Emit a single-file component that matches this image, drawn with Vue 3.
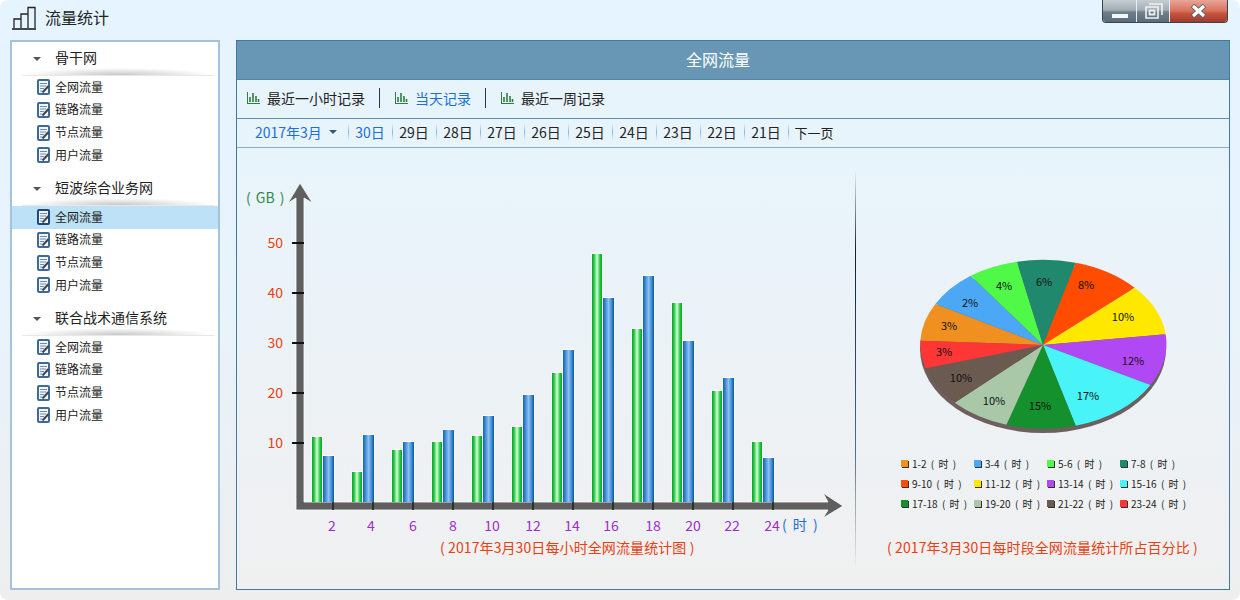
<template>
  <div class="win">
    <header class="titlebar">
      <svg class="logo" width="25" height="24" viewBox="0 0 25 24">
        <path d="M2 22V13h7v9M9 22V8h7v14M16 22V1.500h7V22" fill="none" stroke="#222" stroke-width="1.300"/>
        <path d="M0 23h24" stroke="#111" stroke-width="1.500"/>
      </svg>
      <span class="apptitle">流量统计</span>
      <div class="winbtns">
        <div class="wb wb-min"><i></i></div>
        <div class="wb wb-max">
          <svg width="19" height="16" viewBox="0 0 19 16">
            <path d="M5 1h13v11M2 4h12v11H2z" fill="none" stroke="#f2f4f6" stroke-width="1.600"/>
            <path d="M5.500 7.500h5v4h-5z" fill="none" stroke="#e8ecef" stroke-width="1.800"/>
          </svg>
        </div>
        <div class="wb wb-close">
          <svg width="17" height="14" viewBox="0 0 17 14">
            <path d="M2.500 1.500 14.500 12.500M14.500 1.500 2.500 12.500" stroke="#51606f" stroke-width="5"/>
            <path d="M3 2 14 12M14 2 3 12" stroke="#fff" stroke-width="3.200"/>
          </svg>
        </div>
      </div>
    </header>

    <div class="content">
      <aside class="side">
        <section v-for="g in groups" :key="g" class="group">
          <div class="ghead"><i class="caret"></i>{{ g }}</div>
          <div v-for="it in items" :key="it" class="row" :class="{ on: g === '短波综合业务网' && it === '全网流量' }">
            <svg class="doc" width="13" height="16" viewBox="0 0 13 16">
              <rect x="1" y="1" width="11" height="14" rx="1" fill="#f2f6fa" stroke="#3f6a96" stroke-width="2"/>
              <path d="M3 4.500h7M3 7h6M3 9.500h4M3 12h2" stroke="#6f8cac" stroke-width="1"/>
              <path d="M5.500 13.500 11.500 7" stroke="#3c4650" stroke-width="2"/>
            </svg>
            <span>{{ it }}</span>
          </div>
        </section>
      </aside>

      <main class="panel">
        <div class="phead">全网流量</div>
        <nav class="tabs">
          <template v-for="(t, i) in tabs" :key="t">
            <i v-if="i" class="tabsep"></i>
            <div class="tab" :class="{ cur: i === 1 }">
              <svg width="13" height="12" viewBox="0 0 13 12">
                <path d="M.5 0v12M.5 11.500H13" stroke="#2f7f40" fill="none"/>
                <path d="M3 10V5M6 10V1M9 10V4M11.500 10V7" stroke="#2f7f40" stroke-width="1.600"/>
              </svg>
              <span>{{ t }}</span>
            </div>
          </template>
        </nav>
        <nav class="dates">
          <div class="month">2017年3月<i class="mcaret"></i></div>
          <div v-for="(d, i) in days" :key="d" class="day" :class="{ cur: i === 0 }">{{ d }}</div>
          <div class="day next">下一页</div>
        </nav>

        <div class="body">
          <svg class="chart" width="618" height="441" viewBox="237 148 618 441">
            <defs>
              <linearGradient id="gg" x1="0" x2="1" y1="0" y2="0">
                <stop offset="0" stop-color="#00a820"/>
                <stop offset=".2" stop-color="#28c448"/>
                <stop offset=".5" stop-color="#d4ffd4"/>
                <stop offset=".8" stop-color="#28c448"/>
                <stop offset="1" stop-color="#00a818"/>
              </linearGradient>
              <linearGradient id="gb" x1="0" x2="1" y1="0" y2="0">
                <stop offset="0" stop-color="#0f62b4"/>
                <stop offset=".2" stop-color="#3a88d0"/>
                <stop offset=".5" stop-color="#8cc0f0"/>
                <stop offset=".8" stop-color="#3a88d0"/>
                <stop offset="1" stop-color="#0a54a0"/>
              </linearGradient>
            </defs>

            <text class="gb" x="246" y="203">( GB )</text>
            <text v-for="v in yTicks" :key="v" class="ylab" x="283" :y="y(v) + 5">{{ v }}</text>

            <path d="M296 510V198L288 203 300 183 312.500 203 304 198V502H828L823 493 843 506 823 518 828 510Z"
              fill="#5f5f5f" stroke="#fff" stroke-width=".8"/>
            <path v-for="v in yTicks" :key="'t' + v" :d="`M292 ${y(v)}h12`" stroke="#111" stroke-width="2"/>
            <path v-for="n in 12" :key="'x' + n" :d="`M${293 + n * 40} 502v8`" stroke="#222" stroke-width="1.600"/>

            <g v-for="(b, i) in bars" :key="i">
              <rect :x="311.500 + i * 40" :y="b[0] - 1" width="11" :height="503 - b[0]" fill="#fff"/>
              <rect :x="322.500 + i * 40" :y="b[1] - 1" width="12" :height="503 - b[1]" fill="#fff"/>
              <rect :x="312 + i * 40" :y="b[0]" width="10" :height="502 - b[0]" fill="url(#gg)"/>
              <rect :x="323 + i * 40" :y="b[1]" width="11" :height="502 - b[1]" fill="url(#gb)"/>
            </g>

            <text v-for="l in xLabels" :key="l.t" class="xlab" :x="l.x" y="531">{{ l.t }}</text>
            <text class="hour" x="782" y="530">( 时 )</text>
            <text class="cap" x="440" y="553">( 2017年3月30日每小时全网流量统计图 )</text>
          </svg>

          <i class="vline"></i>

          <div class="right">
            <svg class="pie" width="373" height="300" viewBox="857 170 373 300">
              <ellipse cx="1044" cy="349" rx="123" ry="84" fill="#6e5f5f"/>
              <path v-for="s in slices" :key="s.c" :d="s.d" :fill="s.c"/>
              <text v-for="l in pieLabels" :key="l[1] + '' + l[2]" class="pct" :x="l[1]" :y="l[2] + 4">{{ l[0] }}</text>
            </svg>
            <div class="legend">
              <div v-for="l in legend" :key="l.t" class="lg">
                <i :style="{ background: l.c }"></i><span>{{ l.t }} ( 时 )</span>
              </div>
            </div>
            <p class="piecap">( 2017年3月30日每时段全网流量统计所占百分比 )</p>
          </div>
        </div>
      </main>
    </div>
  </div>
</template>

<script setup>
const groups = ['骨干网', '短波综合业务网', '联合战术通信系统']
const items = ['全网流量', '链路流量', '节点流量', '用户流量']
const tabs = ['最近一小时记录', '当天记录', '最近一周记录']
const days = ['30日', '29日', '28日', '27日', '26日', '25日', '24日', '23日', '22日', '21日']

const yTicks = [10, 20, 30, 40, 50]
const y = v => 493 - v * 5

// tops of green / blue bar per 2 hours, in chart coordinates
const bars = [
  [437, 456], [472, 435], [450, 442], [442, 430], [436, 416], [427, 395],
  [373, 350], [254, 298], [329, 276], [303, 341], [391, 378], [442, 458],
]
const xLabels = [
  { t: '2', x: 332 }, { t: '4', x: 371 }, { t: '6', x: 413 }, { t: '8', x: 453 },
  { t: '10', x: 492 }, { t: '12', x: 533 }, { t: '14', x: 572 }, { t: '16', x: 611 },
  { t: '18', x: 653 }, { t: '20', x: 693 }, { t: '22', x: 732 }, { t: '24', x: 772 },
]

// rim point where each slice starts, going clockwise
const cx = 1044
const cy = 345
const rim = [
  [921.4, 340.7, '#f09020'], [936.4, 304, '#4ca8f4'], [971.7, 275.7, '#50f848'],
  [1018, 261.7, '#20886c'], [1076.7, 262.7, '#ff4c00'], [1135.7, 287.7, '#ffe800'],
  [1166.7, 334.3, '#b048f4'], [1151.4, 385, '#48f4f8'], [1076.7, 425.7, '#14902c'],
  [1007.4, 424.7, '#a8c8a8'], [955.7, 402.7, '#6a5a50'], [926.7, 368.3, '#ff3636'],
]
const slices = rim.map((p, i) => {
  const next = rim[(i + 1) % rim.length]
  return { c: p[2], d: `M${cx} ${cy}L${p[0]} ${p[1]}A123 84 0 0 1 ${next[0]} ${next[1]}Z` }
})

const pieLabels = [
  ['3%', 950, 326], ['3%', 945, 352], ['10%', 962, 378], ['10%', 995, 401],
  ['15%', 1041, 406], ['17%', 1089, 396], ['12%', 1134, 361], ['10%', 1124, 317],
  ['8%', 1087, 285], ['6%', 1045, 282], ['4%', 1005, 286], ['2%', 971, 303],
]
const legend = [
  { t: '1-2', c: '#f09020' }, { t: '3-4', c: '#4ca8f4' }, { t: '5-6', c: '#50f848' }, { t: '7-8', c: '#20886c' },
  { t: '9-10', c: '#ff4c00' }, { t: '11-12', c: '#ffe800' }, { t: '13-14', c: '#b048f4' }, { t: '15-16', c: '#48f4f8' },
  { t: '17-18', c: '#14902c' }, { t: '19-20', c: '#a8c8a8' }, { t: '21-22', c: '#6a5a50' }, { t: '23-24', c: '#ff3636' },
]
</script>

<style scoped>
.win{width:1240px;height:600px;box-sizing:border-box;display:flex;flex-direction:column;border-radius:8px;background:linear-gradient(#e5f4fe,#e8f3fb 50%,#eeeeee);font-family:"Noto Sans CJK SC","Open Sans",sans-serif;color:#222;overflow:hidden}
.titlebar{height:40px;display:flex;align-items:flex-start;padding-left:12px;flex-shrink:0}
.logo{margin-top:6px}
.apptitle{font-size:16px;line-height:34px;margin-left:8px}
.winbtns{margin-left:auto;margin-right:12px;display:flex;height:22px;border:1px solid #3a4450;border-top:0;border-radius:0 0 4px 4px;overflow:hidden;gap:1px;background:#e8eef2}
.wb{display:flex;align-items:center;justify-content:center;height:22px;background:linear-gradient(#c6cdd0,#a4aeb4 45%,#6f7f8c 55%,#5c6a78)}
.wb-min{width:33px}
.wb-min i{width:16px;height:4px;background:#f2f4f6;margin-top:9px}
.wb-max{width:32px}
.wb-close{width:57px;background:linear-gradient(#e8a698,#d9705c 50%,#c8563e 60%,#9e3a30)}

.content{flex:1;display:flex;padding:0 10px 10px;gap:16px;min-height:0}
.side{width:210px;box-sizing:border-box;border:2px solid #a4c2d8;background:#fff;flex-shrink:0}
.group{margin-bottom:5.33px}
.ghead{position:relative;height:34px;line-height:30px;font-size:14px;padding-left:43px}
.ghead::after{content:"";position:absolute;left:10px;right:4px;bottom:0;height:7px;background:radial-gradient(ellipse at 50% 100%,rgba(0,0,0,.22),rgba(0,0,0,0) 70%);border-bottom:1px solid #e8e8e8}
.caret{position:absolute;left:21px;top:15px;border:4px solid transparent;border-top:4px solid #555;border-bottom:0}
.row{height:22.67px;display:flex;align-items:center;padding-left:25px;font-size:12px;gap:5px}
.row span{margin-top:-2px}
.row.on{background:#bde2f7}
.row.on .doc rect{stroke:#1f4a78}
.doc{flex-shrink:0}

.panel{flex:1;box-sizing:border-box;border:1px solid #3f7aa3;display:flex;flex-direction:column;min-width:0}
.phead{height:38px;background:#6897b6;color:#fff;font-size:16px;line-height:37px;text-align:center;padding-right:30px;flex-shrink:0;border-bottom:1px solid #5684a4}
.tabs{height:39px;box-sizing:border-box;display:flex;align-items:center;background:#e8f4fc;padding:0 0 3px 10px;border-bottom:1px solid #5e8fb0;flex-shrink:0;font-size:14px}
.tab{display:flex;align-items:center;gap:7px}
.tab.cur{color:#1a70d8}
.tabsep{width:1px;height:20px;background:#1a3a5a;margin:0 15px 0 14px}
.dates{height:29px;box-sizing:border-box;display:flex;align-items:center;background:#e8f4fc;border-bottom:1px solid #8cadc4;flex-shrink:0;font-size:14px;padding:0 0 2px 18px}
.month{width:92.500px;color:#1a70d8;display:flex;align-items:center;flex-shrink:0}
.mcaret{border:4px solid transparent;border-top:4px solid #2a5a88;border-bottom:0;margin-left:7px}
.day{width:44px;box-sizing:border-box;text-align:center;background:linear-gradient(#e8f4fc,#8cb8d8 50%,#e8f4fc) left center/1px 18px no-repeat;flex-shrink:0;padding-left:1px}
.day.cur{color:#1a70d8}
.next{width:52px;font-size:13px}

.body{flex:1;display:flex;background:linear-gradient(#e8f4fc,#f0f0f0);min-height:0}
.chart{display:block;flex-shrink:0}
.gb{font-size:14px;fill:#2f8a46;word-spacing:2px}
.ylab{font-size:14px;fill:#e84010;text-anchor:end}
.xlab{font-size:14px;fill:#9a30c8;text-anchor:middle}
.hour{font-size:14px;fill:#1a70d8;word-spacing:3px}
.cap{font-size:14px;fill:#e84010;letter-spacing:.1px}
.vline{width:1px;height:400px;margin-top:22px;background:linear-gradient(rgba(20,40,60,0),#0c2030 20%,#5a6a78 70%,rgba(150,150,150,0));flex-shrink:0}
.right{flex:1;display:flex;flex-direction:column;min-width:0}
.pie{display:block;margin-top:22px;flex-shrink:0}
.pct{font-size:11px;fill:#111;text-anchor:middle}
.legend{display:grid;grid-template-columns:repeat(4,73px);grid-auto-rows:20px;margin-left:45px;margin-top:-17px}
.lg{display:flex;align-items:center;font-size:10px;gap:4px;white-space:nowrap;word-spacing:2px}
.lg i{width:7px;height:7px;box-shadow:1px 1px 0 #333;flex-shrink:0}
.piecap{margin:24px 0 0 31px;font-size:14px;color:#e84010;white-space:nowrap;letter-spacing:.1px}
</style>
